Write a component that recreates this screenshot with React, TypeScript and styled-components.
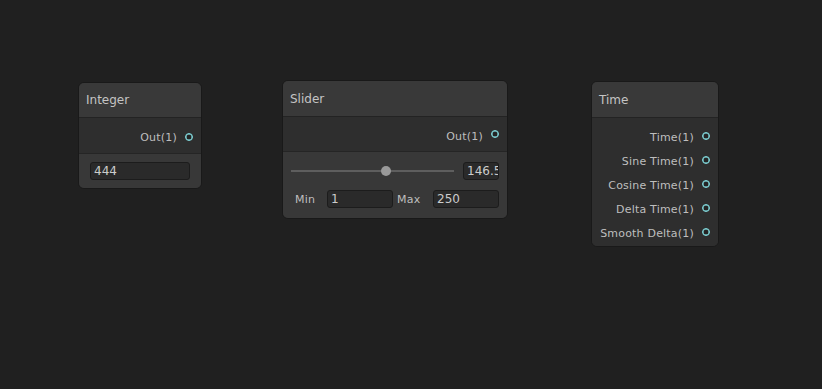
import React from "react";
import styled, { createGlobalStyle } from "styled-components";

const Global = createGlobalStyle`
  *, *::before, *::after { box-sizing: border-box; }
  html, body { margin: 0; padding: 0; background: #202020; }
  body { font-family: "DejaVu Sans", "Liberation Sans", sans-serif; }
`;

const Canvas = styled.div`
  position: relative;
  width: 822px;
  height: 389px;
  background: #202020;
  overflow: hidden;
`;

const Node = styled.div<{ $x: number; $y: number; $w: number }>`
  position: absolute;
  left: ${(p) => p.$x}px;
  top: ${(p) => p.$y}px;
  width: ${(p) => p.$w}px;
  border: 1px solid #191919;
  border-radius: 6px;
  background: #2e2e2e;
  display: flex;
  flex-direction: column;
  overflow: hidden;
  color: #bebebe;
`;

const Title = styled.div<{ $h: number }>`
  height: ${(p) => p.$h}px;
  display: flex;
  align-items: center;
  padding-left: 7px;
  background: #393939;
  border-bottom: 1px solid #232323;
  font-size: 12px;
  color: #c4c4c4;
`;

const Ports = styled.div<{ $pt: number; $pb: number }>`
  display: flex;
  flex-direction: column;
  padding: ${(p) => p.$pt}px 0 ${(p) => p.$pb}px;
  background: #2e2e2e;
`;

const PortRow = styled.div<{ $h: number; $pt: number; $lift: number }>`
  height: ${(p) => p.$h}px;
  padding-top: ${(p) => p.$pt}px;
  display: flex;
  align-items: center;
  justify-content: flex-end;
  gap: 8px;
  padding-right: 8px;
  font-size: 11px;
  line-height: 13px;
  letter-spacing: 0.2px;

  & > span {
    margin-top: ${(p) => -2 * p.$lift}px;
  }
`;

const Port = styled.span`
  width: 8px;
  height: 8px;
  border-radius: 50%;
  border: 1px solid #86e0e4;
  box-shadow: inset 0 0 0 0.5px #86e0e4;
  background: #242424;
`;

const Content = styled.div<{ $pad: string }>`
  display: flex;
  flex-direction: column;
  gap: 10px;
  padding: ${(p) => p.$pad};
  background: #383838;
  border-top: 1px solid #252525;
`;

const Field = styled.div<{ $w: number }>`
  width: ${(p) => p.$w}px;
  height: 18px;
  border: 1px solid #1c1c1c;
  border-radius: 3px;
  background: #2a2a2a;
  color: #cccccc;
  font-size: 12px;
  line-height: 16px;
  padding-left: 3px;
  overflow: hidden;
  white-space: nowrap;
`;

const Row = styled.div`
  display: flex;
  align-items: center;
`;

const Track = styled.div`
  position: relative;
  width: 163px;
  height: 2px;
  background: #5e5e5e;
  margin-right: 9px;
`;

const Thumb = styled.span`
  position: absolute;
  top: -4px;
  width: 10px;
  height: 10px;
  margin-left: -5px;
  border-radius: 50%;
  background: #999999;
`;

const Label = styled.span<{ $w: number }>`
  width: ${(p) => p.$w}px;
  padding-left: 4px;
  font-size: 11px;
  letter-spacing: 0.2px;
  color: #bebebe;
`;

const sliderPos = ((146.5 - 1) / (250 - 1)) * 100;

const timePorts = ["Time(1)", "Sine Time(1)", "Cosine Time(1)", "Delta Time(1)", "Smooth Delta(1)"];

export default function App() {
  return (
    <>
      <Global />
      <Canvas>
        <Node $x={78} $y={82} $w={124}>
          <Title $h={35}>Integer</Title>
          <Ports $pt={0} $pb={0}>
            <PortRow $h={35} $pt={3} $lift={0.5}>
              Out(1)
              <Port />
            </PortRow>
          </Ports>
          <Content $pad="8px 10px 8px 11px">
            <Field $w={100}>444</Field>
          </Content>
        </Node>

        <Node $x={282} $y={80} $w={226}>
          <Title $h={36}>Slider</Title>
          <Ports $pt={0} $pb={0}>
            <PortRow $h={34} $pt={4} $lift={2}>
              Out(1)
              <Port />
            </PortRow>
          </Ports>
          <Content $pad="10px 8px 10px 8px">
            <Row>
              <Track>
                <Thumb style={{ left: `${sliderPos}%` }} />
              </Track>
              <Field $w={36}>146.5</Field>
            </Row>
            <Row>
              <Label $w={36}>Min</Label>
              <Field $w={66}>1</Field>
              <Label $w={40}>Max</Label>
              <Field $w={66}>250</Field>
            </Row>
          </Content>
        </Node>

        <Node $x={591} $y={81} $w={128}>
          <Title $h={36}>Time</Title>
          <Ports $pt={7} $pb={1}>
            {timePorts.map((t) => (
              <PortRow key={t} $h={24.1} $pt={0} $lift={1.5}>
                {t}
                <Port />
              </PortRow>
            ))}
          </Ports>
        </Node>
      </Canvas>
    </>
  );
}
